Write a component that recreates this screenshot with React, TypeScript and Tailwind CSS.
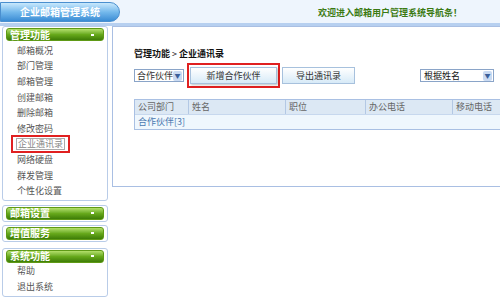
const FONT = { fontFamily: '"Noto Sans CJK SC", "Noto Sans", sans-serif' };

const menuItems = [
  "邮箱概况",
  "部门管理",
  "邮箱管理",
  "创建邮箱",
  "删除邮箱",
  "修改密码",
  "企业通讯录",
  "网络硬盘",
  "群发管理",
  "个性化设置",
];

function GreenBar({ label }: { label: string }) {
  return (
    <div className="mx-[3px] flex h-[13px] items-center justify-between rounded-[3px] border border-[#5f9a16] bg-gradient-to-b from-[#b4e06a] via-[#67a91b] to-[#3e7d07] px-[3px]">
      <span className="text-[10px] leading-none font-bold text-white">{label}</span>
      <span className="mr-[6px] h-[2px] w-[3px] bg-white" />
    </div>
  );
}

function SideBox({ label, children, className = "" }: { label: string; children?: React.ReactNode; className?: string }) {
  return (
    <div className={`rounded-[3px] border border-[#b9cce8] bg-white py-[1px] ${className}`}>
      <GreenBar label={label} />
      {children}
    </div>
  );
}

function Cell({ children, w, last }: { children?: React.ReactNode; w: string; last?: boolean }) {
  return (
    <div className={`${w} flex h-full items-center px-[3px] ${last ? "" : "border-r border-[#b3c8e4]"}`}>
      {children}
    </div>
  );
}

export default function App() {
  return (
    <div className="h-[300px] w-[500px] overflow-hidden bg-white text-[9px] leading-[12px] text-[#333]" style={FONT}>
      {/* top bar */}
      <div className="flex h-[26px] items-start justify-between border-b-[3px] border-[#b7d0f0] bg-[#eef5fd] pt-[2px]">
        <div className="flex h-[20px] w-[120px] items-center justify-center rounded-r-full border border-[#4a8fcf] bg-gradient-to-b from-[#c8e8fc] via-[#74b9ec] to-[#3a8cd4] text-[10px] font-bold text-white">
          企业邮箱管理系统
        </div>
        <div className="mt-[5px] mr-[38px] text-[9px] font-bold text-[#3b7a12]">欢迎进入邮箱用户管理系统导航条！</div>
      </div>

      <div className="flex">
        {/* sidebar */}
        <div className="flex w-[110px] flex-col pl-[2px] pr-[2px]">
          <SideBox label="管理功能">
            <div className="flex flex-col pt-[2px] pl-[14px]">
              {menuItems.map((m) => (
                <div key={m} className="flex h-[15.6px] items-center text-[#555]">
                  {m === "企业通讯录" ? (
                    <span className="-ml-[6px] flex h-[18px] items-center border-2 border-[#e02020] px-[3px] text-[#888]">
                      <span className="border border-[#aaa] px-[1px] leading-[10px]">{m}</span>
                    </span>
                  ) : (
                    m
                  )}
                </div>
              ))}
            </div>
          </SideBox>
          <SideBox label="邮箱设置" className="mt-[4px]" />
          <SideBox label="增值服务" className="mt-[3px]" />
          <SideBox label="系统功能" className="mt-[6px] flex-1">
            <div className="flex flex-col pl-[14px]">
              <div className="flex h-[16px] items-center text-[#555]">帮助</div>
              <div className="flex h-[16px] items-center text-[#555]">退出系统</div>
            </div>
          </SideBox>
        </div>

        {/* main */}
        <div className="flex-1 pl-[2px]">
          <div className="h-[161px] border border-r-0 border-[#a9bfe3] bg-white pt-[21px] pl-[21px]">
            <div className="font-bold text-[#111]">
              管理功能 <span className="font-normal">&gt;</span> 企业通讯录
            </div>
            <div className="mt-[3px] flex items-center">
              <div className="flex h-[13px] w-[50px] items-center justify-between border border-[#8aa4c8] bg-white pl-[2px] pr-[1px]">
                <span>合作伙伴</span>
                <span className="flex h-[10px] w-[9px] items-center justify-center rounded-[2px] bg-[#c9daf2] text-[6px] leading-none text-[#3b5f9a]">▼</span>
              </div>
              <div className="ml-[3px] border-2 border-[#e02020] px-[1px] py-[2px]">
                <div className="flex h-[17px] w-[87px] items-center justify-center border border-[#a7c1dd] bg-gradient-to-b from-white to-[#d7eaf7] shadow-[1px_1px_2px_rgba(0,0,0,0.25)]">
                  新增合作伙伴
                </div>
              </div>
              <div className="ml-[2px] flex h-[17px] w-[73px] items-center justify-center border border-[#a7c1dd] bg-gradient-to-b from-white to-[#d7eaf7]">
                导出通讯录
              </div>
              <div className="ml-auto mr-[6px] flex h-[13px] w-[74px] items-center justify-between border border-[#8aa4c8] bg-white pl-[3px] pr-[1px]">
                <span className="text-[#111]">根据姓名</span>
                <span className="flex h-[10px] w-[9px] items-center justify-center rounded-[2px] bg-[#c9daf2] text-[6px] leading-none text-[#3b5f9a]">▼</span>
              </div>
            </div>
            <div className="mt-[11px] border border-r-0 border-[#a9c0e3]">
              <div className="flex h-[14px] bg-[#dce8f4] text-[#666]">
                <Cell w="w-[54px]">公司部门</Cell>
                <Cell w="w-[97px]">姓名</Cell>
                <Cell w="w-[80px]">职位</Cell>
                <Cell w="w-[87px]">办公电话</Cell>
                <Cell w="flex-1" last>移动电话</Cell>
              </div>
              <div className="flex h-[15px] items-center border-t border-[#c7d8ee] bg-[#eff7fd] px-[3px] text-[#4b77b0]">
                合作伙伴[3]
              </div>
            </div>
          </div>
        </div>
      </div>
    </div>
  );
}
